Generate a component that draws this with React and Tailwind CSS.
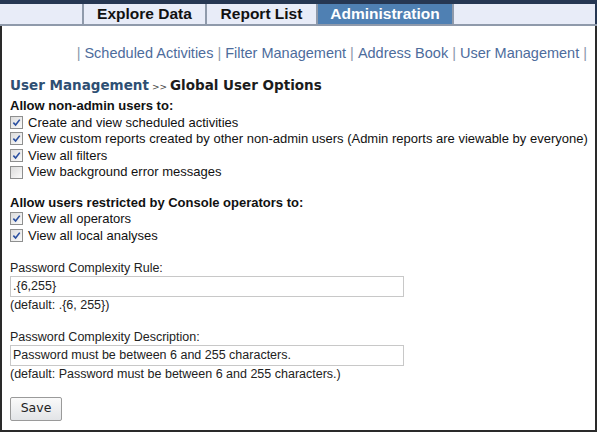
import React from "react";

const TABS = [
  { label: "Explore Data", w: "w-[123px]" },
  { label: "Report List", w: "w-[111px]" },
  { label: "Administration", w: "w-[136px]", active: true },
];

const SUB_LINKS = ["Scheduled Activities", "Filter Management", "Address Book", "User Management"];

function Check({ checked, children }) {
  return (
    <label className="flex items-center h-[16.6px] gap-[5px]">
      <span className="w-[13px] h-[13px] border border-[#8e8f8f] bg-gradient-to-br from-[#dcdcdc] to-[#fbfbfb] flex items-center justify-center shrink-0">
        {checked && (
          <svg viewBox="0 0 10 10" className="w-[9px] h-[9px]">
            <path d="M1.5 5.2 L4 7.8 L8.6 1.8" fill="none" stroke="#2a4fa0" strokeWidth="1.8" />
          </svg>
        )}
      </span>
      <span>{children}</span>
    </label>
  );
}

export default function App() {
  return (
    <div className="w-[597px] h-[432px] bg-white flex flex-col font-['Liberation_Sans',Arial,sans-serif] text-[#111]">
      {/* Tab bar */}
      <div className="h-[4px] shrink-0 bg-[#263753]" />
      <div className="flex shrink-0 h-[22px] bg-[#e8ecf8] border-b-2 border-[#8f9aab]">
        <div className="w-[84px] border-r-2 border-[#8f9aab]" />
        {TABS.map((t) => (
          <div
            key={t.label}
            className={`${t.w} flex items-center justify-center text-[15.5px] font-bold border-r-2 border-[#8f9aab] ${
              t.active ? "bg-[#4f80b3] text-white" : "text-[#111]"
            }`}
          >
            {t.label}
          </div>
        ))}
        <div className="flex-1 border-r-2 border-[#263753]" />
      </div>

      {/* Content */}
      <div className="flex-1 min-h-0 border-x-2 border-b-2 border-[#2a2a2a] flex flex-col">
        <div className="flex justify-end pr-[8px] pt-[17px] text-[14.5px] text-[#4d6c9c]">
          <span className="text-[#8a97ab]">|</span>
          {SUB_LINKS.map((l) => (
            <React.Fragment key={l}>
              <span className="px-[4px]">{l}</span>
              <span className="text-[#8a97ab]">|</span>
            </React.Fragment>
          ))}
        </div>

        <div className="pl-[8px] pt-[10px] flex items-baseline font-['DejaVu_Sans',Verdana,sans-serif] font-bold text-[13.5px]">
          <span className="text-[#2e4f73]">User Management</span>
          <span className="text-[9px] text-[#444] px-[3px] font-normal">&gt;&gt;</span>
          <span className="text-[#1c1c1c]">Global User Options</span>
        </div>

        <div className="pl-[8px] pt-[3px] text-[13px]">
          <div className="font-bold h-[16px] flex items-center">Allow non-admin users to:</div>
          <Check checked>Create and view scheduled activities</Check>
          <Check checked>View custom reports created by other non-admin users (Admin reports are viewable by everyone)</Check>
          <Check checked>View all filters</Check>
          <Check>View background error messages</Check>

          <div className="font-bold h-[16px] flex items-center mt-[14px]">Allow users restricted by Console operators to:</div>
          <Check checked>View all operators</Check>
          <Check checked>View all local analyses</Check>
        </div>

        <div className="pl-[8px] pt-[17px] text-[12.5px] text-[#222]">
          <div className="h-[15px] flex items-center">Password Complexity Rule:</div>
          <input
            readOnly
            value=".{6,255}"
            className="block w-[394px] h-[21px] border border-[#c8c8c8] px-[2px] text-[12.5px] outline-none"
          />
          <div className="h-[16px] flex items-center mt-[1px]">(default: .{"{6, 255}"})</div>

          <div className="h-[15px] flex items-center mt-[16px]">Password Complexity Description:</div>
          <input
            readOnly
            value="Password must be between 6 and 255 characters."
            className="block w-[394px] h-[21px] border border-[#c8c8c8] px-[2px] text-[12.5px] outline-none"
          />
          <div className="h-[16px] flex items-center mt-[1px]">(default: Password must be between 6 and 255 characters.)</div>

          <button className="mt-[14px] w-[52px] h-[24px] border border-[#9a9a9a] rounded-[2px] bg-gradient-to-b from-[#fafafa] to-[#e2e4e7] font-['DejaVu_Sans',Verdana,sans-serif] text-[12.5px] text-[#222]">
            Save
          </button>
        </div>
      </div>
    </div>
  );
}
